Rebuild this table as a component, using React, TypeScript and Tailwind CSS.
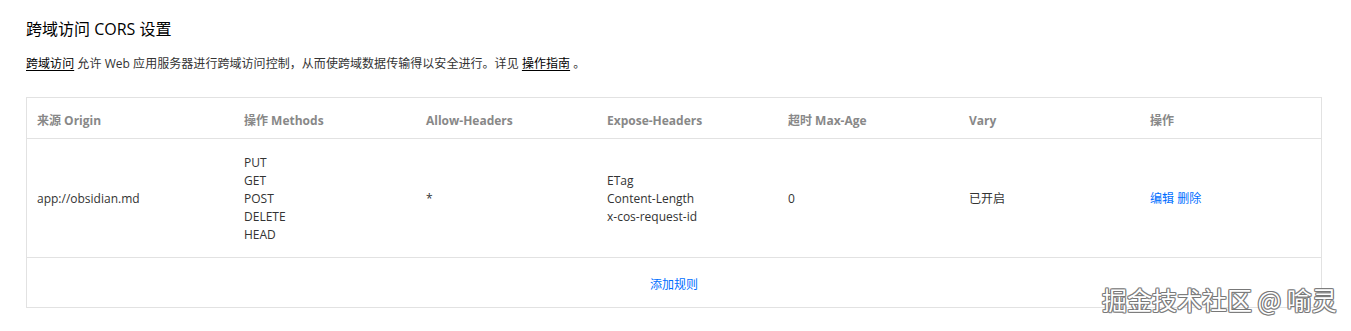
import React from "react";

const font = {
  fontFamily: '"Open Sans", "Noto Sans CJK SC", sans-serif',
};

export default function App() {
  const cols = ["w-[207px]", "w-[182px]", "w-[181px]", "w-[181px]", "w-[181px]", "w-[181px]", "w-[182px]"];
  const headers = ["来源 Origin", "操作 Methods", "Allow-Headers", "Expose-Headers", "超时 Max-Age", "Vary", "操作"];
  return (
    <div className="relative w-[1351px] h-[331px] bg-white overflow-hidden text-[#333]" style={font}>
      <div className="pl-[26px] pt-[17px]">
        <h2 className="text-[16px] leading-[24px] text-[#000]">跨域访问 CORS 设置</h2>
        <p className="mt-[15px] text-[12px] leading-[16px] text-[#333] tracking-[0.05px]">
          <span className="underline underline-offset-2 text-[#000]">跨域访问</span> 允许 Web 应用服务器进行跨域访问控制，从而使跨域数据传输得以安全进行。详见{" "}
          <span className="underline underline-offset-2 text-[#000]">操作指南</span> 。
        </p>
        <div className="mt-[25px] w-[1296px] border border-[#e2e2e2] text-[12px]">
          <div className="flex h-[41px] items-center pt-[5px] border-b border-[#e2e2e2] font-bold text-[#888]">
            {headers.map((h, i) => (
              <div key={i} className={`${cols[i]} shrink-0 px-[10px]`}>{h}</div>
            ))}
          </div>
          <div className="flex h-[119px] items-center pt-[2px] border-b border-[#e2e2e2] leading-[18px] text-[#333]">
            <div className={`${cols[0]} shrink-0 px-[10px]`}>app://obsidian.md</div>
            <div className={`${cols[1]} shrink-0 px-[10px] flex flex-col`}>
              <span>PUT</span>
              <span>GET</span>
              <span>POST</span>
              <span>DELETE</span>
              <span>HEAD</span>
            </div>
            <div className={`${cols[2]} shrink-0 px-[10px]`}>*</div>
            <div className={`${cols[3]} shrink-0 px-[10px] flex flex-col`}>
              <span>ETag</span>
              <span>Content-Length</span>
              <span>x-cos-request-id</span>
            </div>
            <div className={`${cols[4]} shrink-0 px-[10px]`}>0</div>
            <div className={`${cols[5]} shrink-0 px-[10px]`}>已开启</div>
            <div className={`${cols[6]} shrink-0 px-[10px] text-[#006eff]`}>
              <span>编辑</span> <span>删除</span>
            </div>
          </div>
          <div className="flex h-[49px] items-center justify-center pt-[4px] text-[#006eff]">添加规则</div>
        </div>
      </div>
      <div
        className="absolute left-[1102px] top-[284px] text-[25px] leading-[30px] text-white whitespace-nowrap"
        style={{
          fontFamily: '"Noto Sans CJK SC", sans-serif',
          textShadow:
            "1px 0 0 #777, -1px 0 0 #777, 0 1px 0 #777, 0 -1px 0 #777, 1px 1px 0 #999, -1px -1px 0 #999, 1px -1px 0 #999, -1px 1px 0 #999",
        }}
      >
        掘金技术社区 @ 喻灵
      </div>
    </div>
  );
}
